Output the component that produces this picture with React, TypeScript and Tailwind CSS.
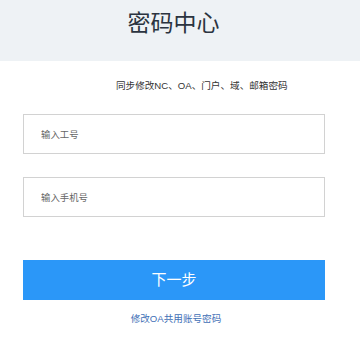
export default function App() {
  return (
    <div className="w-[360px] h-[340px] bg-white font-['Liberation_Sans','Noto_Sans_CJK_SC',sans-serif]">
      {/* Header */}
      <div className="h-[61px] bg-[#eef2f5] flex justify-center pt-[8px] pr-[13px]">
        <h1 className="text-[23px] leading-[30px] text-[#2b3440]">密码中心</h1>
      </div>

      <div className="ml-[23px] w-[302px]">
        <p className="pl-[93px] pt-[18px] text-[9.6px] leading-[14px] text-[#333]">
          同步修改NC、OA、门户、域、邮箱密码
        </p>

        <div className="mt-[21px] flex flex-col gap-[23px]">
          <input
            className="h-[40px] w-full border border-[#d2d2d2] pl-[17px] pr-[16px] text-[9.4px] text-[#333] placeholder:text-[#666] outline-none"
            placeholder="输入工号"
          />
          <input
            className="h-[40px] w-full border border-[#d2d2d2] pl-[17px] pr-[16px] text-[9.4px] text-[#333] placeholder:text-[#666] outline-none"
            placeholder="输入手机号"
          />
        </div>

        <button className="mt-[43px] h-[40px] w-full bg-[#2b97f8] text-white text-[15px]">
          下一步
        </button>

        <p className="mt-[12px] pl-[4px] text-center text-[9.6px] leading-[14px] text-[#3f6fb6]">
          修改OA共用账号密码
        </p>
      </div>
    </div>
  );
}
